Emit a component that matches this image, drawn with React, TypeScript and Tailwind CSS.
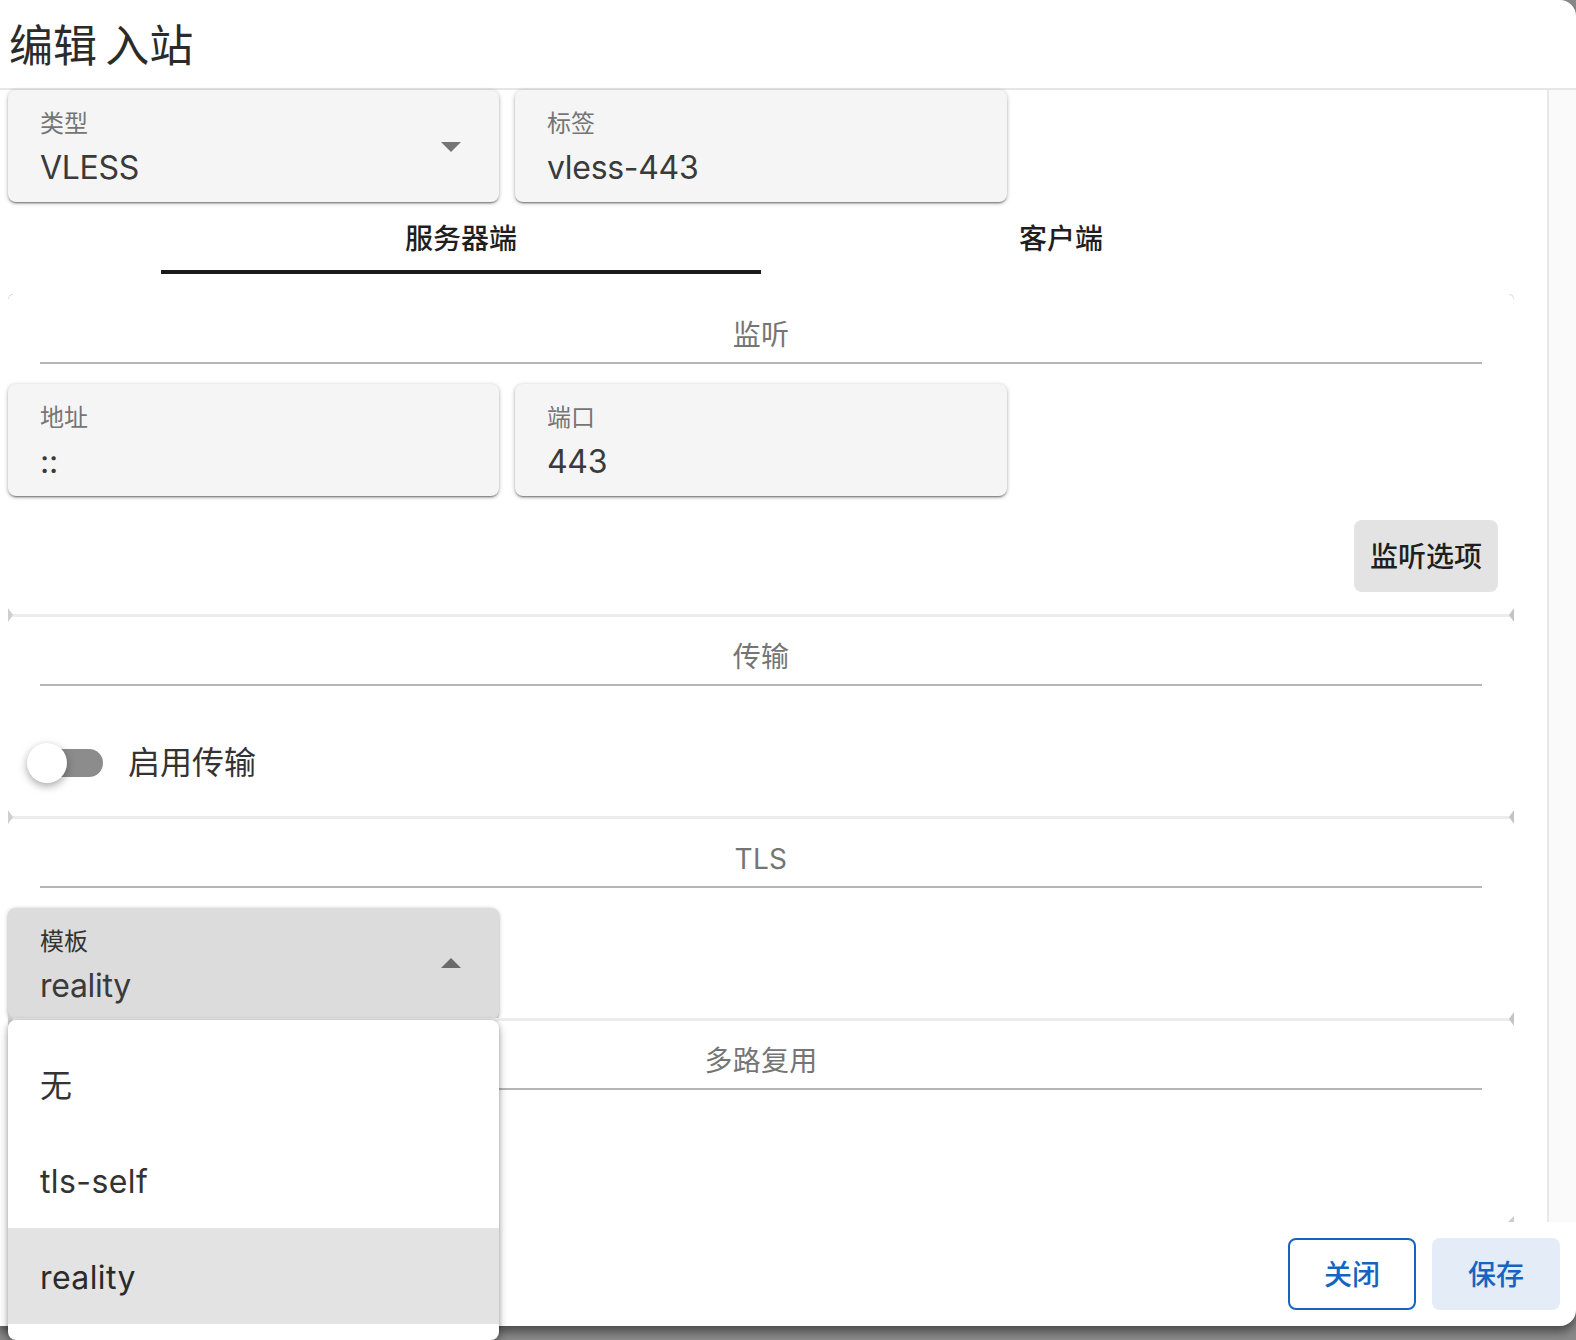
const fieldShadow =
  "shadow-[0_2px_2px_-1px_rgba(0,0,0,0.45),0_1px_4px_0_rgba(0,0,0,0.3)]";

function Arrow({ open }: { open?: boolean }) {
  return (
    <svg
      className={open ? "w-12 h-12 rotate-180 fill-[#6b6b6b]" : "w-12 h-12 fill-[#757575]"}
      viewBox="0 0 24 24"
    >
      <path d="M7 10l5 5 5-5z" />
    </svg>
  );
}

function Field({
  label,
  value,
  select,
  open,
  wide,
}: {
  label: string;
  value: string;
  select?: boolean;
  open?: boolean;
  wide?: boolean;
}) {
  return (
    <div
      className={`h-[112px] rounded-lg flex items-center justify-between pl-8 pr-6 ${fieldShadow} ${
        wide ? "w-[492px]" : "w-[491px]"
      } ${open ? "bg-[#dcdcdc]" : "bg-[#f5f5f5]"}`}
    >
      <div className="flex flex-col">
        <span
          className={`text-[24px] leading-[32px] ${open ? "text-[#333333]" : "text-[#757575]"}`}
        >
          {label}
        </span>
        <span className="text-[32px] leading-[44px] tracking-[-0.3px] text-[#3a3a3a] mt-[6px] -mb-[5px]">
          {value}
        </span>
      </div>
      {select && <Arrow open={open} />}
    </div>
  );
}

function Corner({ side }: { side: "left" | "right" }) {
  if (side === "left") {
    return (
      <svg className="absolute left-2 -top-[8px] w-[5px] h-[14px]" viewBox="0 0 5 14">
        <path d="M0 0L5 7L0 14z" fill="#cfcfcf" />
      </svg>
    );
  }
  return (
    <svg className="absolute right-0 -top-[8px] w-[5px] h-[14px]" viewBox="0 0 5 14">
      <path d="M5 0L0 7L5 14z" fill="#c4c4c4" />
    </svg>
  );
}

function Section({
  title,
  first,
  height,
  children,
}: {
  title: string;
  first?: boolean;
  height: string;
  children?: React.ReactNode;
}) {
  return (
    <section className={`relative w-[1514px] ${height}`}>
      {first ? (
        <>
          <div className="absolute left-2 top-0 w-[5px] h-[5px] rounded-tl-[5px] border-l border-t border-[#dddddd]" />
          <div className="absolute right-0 top-0 w-[5px] h-[5px] rounded-tr-[5px] border-r border-t border-[#dddddd]" />
        </>
      ) : (
        <>
          <div className="absolute left-2 right-0 -top-[2px] h-[3px] bg-[#ececec]" />
          <Corner side="left" />
          <Corner side="right" />
        </>
      )}
      <div className="ml-10 mr-8 h-[70px] border-b-2 border-[#b5b5b5] flex items-center justify-center">
        <span className="text-[28px] leading-[36px] tracking-[0.3px] text-[#757575] pt-[14px]">
          {title}
        </span>
      </div>
      {children}
    </section>
  );
}

export default function App() {
  return (
    <div className="relative w-[1576px] h-[1340px] overflow-hidden bg-[#8a8a8a] font-[Inter,'Noto_Sans_CJK_SC',sans-serif]">
      <div className="h-[1326px] bg-white rounded-tr-2xl rounded-br-2xl flex flex-col shadow-[0_6px_10px_rgba(0,0,0,0.45)]">
        {/* Title */}
        <header className="h-[90px] shrink-0 border-b-2 border-[#e6e6e6] pl-[9px] flex items-center">
          <h1 className="text-[44px] leading-none text-[#2b2b2b] font-normal pt-1 [word-spacing:-4px]">编辑 入站</h1>
        </header>

        {/* Body */}
        <div className="h-[1132px] shrink-0 flex">
          <main className="flex-1 min-w-0">
            <div className="flex gap-4 pl-2">
              <Field label="类型" value="VLESS" select />
              <Field label="标签" value="vless-443" wide />
            </div>

            <div className="w-[1522px] flex justify-center h-[72px]">
              <div className="w-[600px] flex flex-col">
                <div className="flex-1 flex items-center justify-center pt-[5px] text-[28px] font-medium text-[#1f1f1f]">
                  服务器端
                </div>
                <div className="h-1 bg-[#1a1a1a]" />
              </div>
              <div className="w-[600px] flex flex-col">
                <div className="flex-1 flex items-center justify-center pt-[5px] text-[28px] font-medium text-[#1f1f1f]">
                  客户端
                </div>
                <div className="h-1" />
              </div>
            </div>

            <div className="h-5" />

            <Section title="监听" first height="h-[322px]">
              <div className="flex gap-4 pl-2 pt-5">
                <Field label="地址" value="::" />
                <Field label="端口" value="443" wide />
              </div>
              <div className="flex justify-end pr-4 pt-6">
                <button className="w-[144px] h-[72px] rounded-lg bg-[#e3e3e3] pt-[2px] text-[28px] font-medium text-[#1f1f1f]">
                  监听选项
                </button>
              </div>
            </Section>

            <Section title="传输" height="h-[202px]">
              <div className="flex items-center pl-[27px] pt-[56px]">
                <div className="relative w-[76px] h-10 flex items-center">
                  <div className="ml-2 w-[68px] h-7 rounded-full bg-[#8c8c8c]" />
                  <div className="absolute left-0 top-0 w-10 h-10 rounded-full bg-white shadow-[0_3px_8px_rgba(0,0,0,0.35)]" />
                </div>
                <span className="ml-[25px] pt-[1px] text-[32px] leading-10 text-[#333333]">启用传输</span>
              </div>
            </Section>

            <Section title="TLS" height="h-[202px]">
              <div className="pl-2 pt-5">
                <Field label="模板" value="reality" select open />
              </div>
            </Section>

            <Section title="多路复用" height="h-[202px]">
              <svg className="absolute right-0 bottom-0 w-[6px] h-[6px]" viewBox="0 0 6 6">
                <path d="M6 0V6H0z" fill="#cccccc" />
              </svg>
            </Section>
          </main>

          {/* Scrollbar track */}
          <div className="w-[29px] shrink-0 bg-[#fafafa] border-l-2 border-[#e8e8e8]" />
        </div>

        {/* Actions */}
        <footer className="flex-1 flex justify-end gap-4 pr-4 pt-4">
          <button className="w-[128px] h-[72px] rounded-lg border-2 border-[#1565c0] pt-[2px] text-[28px] font-medium text-[#1565c0]">
            关闭
          </button>
          <button className="w-[128px] h-[72px] rounded-lg bg-[#e3ecf7] pt-[2px] text-[28px] font-medium text-[#1565c0]">
            保存
          </button>
        </footer>
      </div>

      {/* Open select menu */}
      <div className="absolute left-2 top-[1020px] w-[491px] h-[320px] py-4 bg-white rounded-lg shadow-[0_5px_10px_rgba(0,0,0,0.3),0_0_4px_rgba(0,0,0,0.2)]">
        <div className="h-24 px-8 pt-[3px] flex items-center text-[32px] tracking-[0.4px] text-[#333333]">无</div>
        <div className="h-24 px-8 pt-[3px] flex items-center text-[32px] tracking-[0.4px] text-[#333333]">tls-self</div>
        <div className="h-24 px-8 pt-[3px] flex items-center text-[32px] tracking-[0.4px] text-[#2b2b2b] bg-[#e3e3e3]">reality</div>
      </div>
    </div>
  );
}
